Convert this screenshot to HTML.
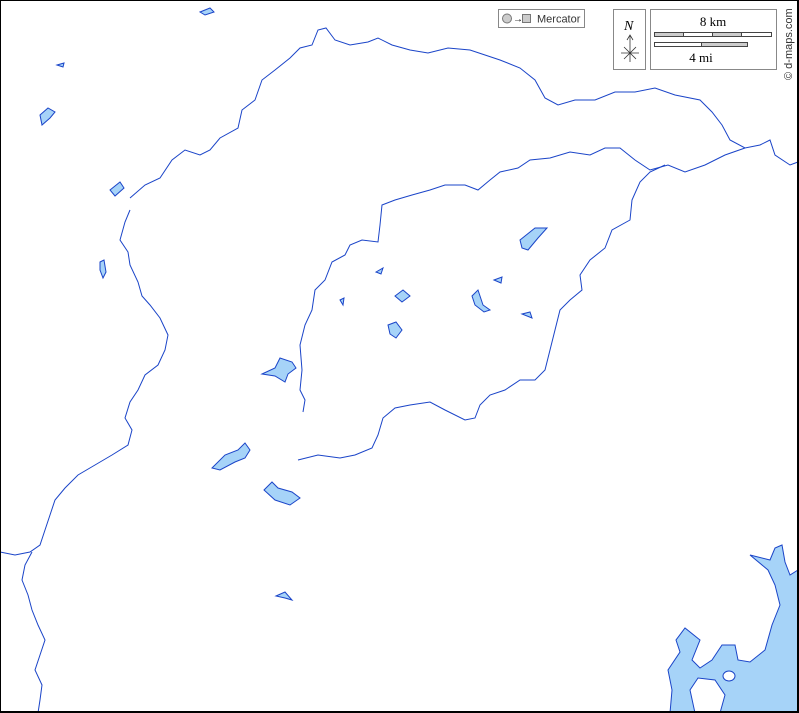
<!DOCTYPE html>
<html><head><style>
html,body{margin:0;padding:0;background:#fff}
svg{display:block}
text{font-family:"Liberation Serif",serif}
</style></head><body>
<svg width="799" height="713" viewBox="0 0 799 713" xmlns="http://www.w3.org/2000/svg">
<rect x="0" y="0" width="799" height="713" fill="#fff"/>
<g fill="none" stroke="#1a44c8" stroke-width="1">
<path d="M130,198 L145,185 L160,178 L172,160 L185,150 L200,155 L210,150 L220,138 L238,128 L242,110 L255,100 L262,80 L275,70 L290,58 L300,48 L312,45 L318,30 L326,28 L335,40 L350,45 L368,42 L378,38 L392,45 L410,50 L428,53 L448,48 L470,50 L485,55 L500,60 L520,68 L535,80 L545,98 L558,105 L575,100 L595,100 L615,92 L635,92 L655,88 L675,95 L700,100 L712,112 L722,125 L730,140 L745,148 L760,145 L770,140 L775,155 L790,165 L798,162"/>
<path d="M745,148 L725,155 L705,165 L685,172 L668,165 L650,170 L635,160 L620,148 L605,148 L590,155 L570,152 L550,158 L530,160 L518,168 L500,172 L490,180 L478,190 L465,185 L445,185 L430,190 L412,195 L395,200 L382,205 L380,225 L378,242 L362,240 L350,245 L345,255 L332,262 L325,280 L315,290 L312,310 L305,325 L300,345 L302,370 L300,390 L305,400 L303,412"/>
<path d="M665,165 L650,172 L640,182 L632,200 L630,220 L612,230 L605,248 L590,260 L580,275 L582,290 L570,300 L560,310 L555,330 L550,350 L545,370 L535,380 L520,380 L505,390 L490,395 L480,405 L475,418 L465,420 L445,410 L430,402 L410,405 L395,408 L383,418 L378,435 L372,448 L355,455 L340,458 L318,455 L298,460"/>
<path d="M130,210 L125,222 L120,240 L128,252 L130,265 L138,282 L142,296 L150,305 L160,318 L168,335 L165,350 L158,365 L145,375 L138,390 L130,402 L125,418 L132,430 L128,445 L112,455 L95,465 L78,475 L65,488 L55,500 L50,515 L45,530 L40,545 L30,552 L15,555 L0,552"/>
<path d="M32,552 L25,565 L22,580 L28,595 L32,610 L38,625 L45,640 L40,655 L35,670 L42,685 L40,700 L38,713"/>
</g>
<g fill="#a6d3f8" stroke="#1a44c8" stroke-width="1">
<path d="M200,12 L210,8 L214,12 L205,15 Z"/>
<path d="M57,65 L64,63 L63,67 Z"/>
<path d="M40,115 L48,108 L55,112 L50,118 L42,125 Z"/>
<path d="M110,190 L120,182 L124,188 L115,196 Z"/>
<path d="M100,262 L104,260 L106,272 L103,278 L100,270 Z"/>
<path d="M520,240 L535,228 L547,228 L538,238 L528,250 L522,248 Z"/>
<path d="M376,272 L383,268 L381,274 Z"/>
<path d="M395,296 L403,290 L410,296 L402,302 Z"/>
<path d="M472,296 L478,290 L483,305 L490,310 L484,312 L475,305 Z"/>
<path d="M494,280 L502,277 L501,283 Z"/>
<path d="M522,314 L530,312 L532,318 Z"/>
<path d="M340,300 L344,298 L343,305 Z"/>
<path d="M388,325 L396,322 L402,330 L396,338 L390,334 Z"/>
<path d="M262,374 L275,368 L280,358 L292,362 L296,368 L288,374 L285,382 L275,376 Z"/>
<path d="M212,468 L225,455 L238,450 L245,443 L250,450 L245,458 L235,462 L220,470 Z"/>
<path d="M264,490 L272,482 L278,488 L292,492 L300,498 L290,505 L275,500 Z"/>
<path d="M276,596 L285,592 L292,600 L285,598 Z"/>
<path d="M750,555 L770,560 L775,548 L782,545 L785,562 L790,575 L798,570 L798,713 L720,713 L725,695 L715,680 L698,678 L690,690 L695,713 L670,713 L672,690 L668,670 L680,652 L676,640 L685,628 L700,640 L692,660 L700,668 L712,660 L722,645 L735,645 L738,660 L750,662 L765,650 L772,625 L780,605 L775,585 L768,570 Z"/>
<ellipse cx="729" cy="676" rx="6" ry="5" fill="#fff"/>
</g>
<g stroke="#888" fill="#fff" stroke-width="1">
<rect x="498.5" y="9.5" width="86" height="18"/>
<rect x="613.5" y="9.5" width="32" height="60"/>
<rect x="650.5" y="9.5" width="126" height="60"/>
</g>
<circle cx="507" cy="18.5" r="4.5" fill="#ccc" stroke="#777"/>
<text x="513" y="22" font-size="10" font-family="Liberation Sans">→</text>
<rect x="522.5" y="14.5" width="8" height="8" fill="#ccc" stroke="#777"/>
<text x="537" y="22.5" font-size="11" fill="#333" style="font-family:'Liberation Sans',sans-serif">Mercator</text>
<text x="624" y="30" font-size="14" font-style="italic">N</text>
<g stroke="#333" stroke-width="0.8" fill="none">
<line x1="630" y1="36" x2="630" y2="62"/><line x1="621" y1="53" x2="639" y2="53"/>
<line x1="624" y1="47" x2="636" y2="59"/><line x1="636" y1="47" x2="624" y2="59"/>
<path d="M627,40 L630,35 L633,40"/>
</g>
<text x="713" y="26" font-size="13" text-anchor="middle">8 km</text>
<rect x="654.5" y="32.5" width="117" height="4" fill="#fff" stroke="#444"/>
<rect x="654.5" y="32.5" width="29" height="4" fill="#ccc" stroke="#444"/>
<rect x="712.5" y="32.5" width="29" height="4" fill="#ccc" stroke="#444"/>
<rect x="654.5" y="42.5" width="93" height="4" fill="#ccc" stroke="#444"/>
<rect x="654.5" y="42.5" width="47" height="4" fill="#fff" stroke="#444"/>
<text x="701" y="62" font-size="13" text-anchor="middle">4 mi</text>
<text transform="translate(792,80) rotate(-90)" font-size="11" fill="#333" style="font-family:'Liberation Sans',sans-serif">© d-maps.com</text>
<rect x="0.5" y="0.5" width="797" height="711" fill="none" stroke="#000" stroke-width="1"/>
<rect x="797" y="0" width="2" height="713" fill="#000"/>
<rect x="0" y="711" width="799" height="2" fill="#000"/>
</svg>
</body></html>
